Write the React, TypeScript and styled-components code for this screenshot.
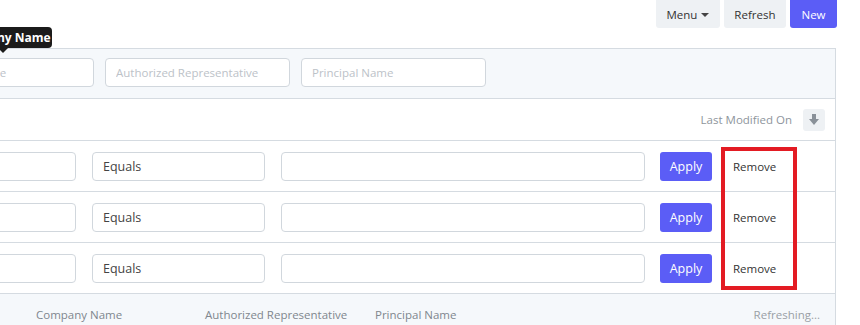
import React from "react";
import styled, { createGlobalStyle } from "styled-components";

const Global = createGlobalStyle`
  html, body { margin: 0; padding: 0; background: #fff; overflow: hidden; }
  body { font-family: "Open Sans", "Liberation Sans", sans-serif; color: #333; }
  * { box-sizing: border-box; }
`;

const Page = styled.div`
  position: relative;
  width: 860px;
  height: 325px;
  overflow: hidden;
`;

const TopBar = styled.div`
  display: flex;
  justify-content: flex-end;
  align-items: flex-start;
  gap: 4px;
  height: 48px;
  padding-right: 23px;
`;

const TopButton = styled.button<{ $primary?: boolean }>`
  margin-top: -4px;
  height: 32px;
  padding: 4px ${(p) => (p.$primary ? "11.5px" : "10.5px")} 0;
  border: none;
  border-radius: 3px;
  font-family: inherit;
  font-size: 11.5px;
  background: ${(p) => (p.$primary ? "#5b5df6" : "#eef1f4")};
  color: ${(p) => (p.$primary ? "#fff" : "#333")};
  display: flex;
  align-items: center;
  gap: 4px;
`;

const Caret = styled.span`
  width: 0;
  height: 0;
  border-left: 4px solid transparent;
  border-right: 4px solid transparent;
  border-top: 4px solid #444;
  margin-top: 1px;
`;

const Tooltip = styled.div`
  position: absolute;
  left: -46px;
  top: 27px;
  width: 98px;
  height: 21px;
  background: #1b1b1b;
  color: #fff;
  font-size: 12px;
  font-weight: 700;
  border-radius: 4px;
  display: flex;
  align-items: center;
  justify-content: center;
  &::after {
    content: "";
    position: absolute;
    left: 50%;
    bottom: -5px;
    margin-left: -5px;
    border-left: 5px solid transparent;
    border-right: 5px solid transparent;
    border-top: 5px solid #1b1b1b;
  }
`;

const Panel = styled.div`
  margin-left: -110px;
  width: 946px;
  border-top: 1px solid #d5dbe1;
  border-right: 1px solid #d5dbe1;
`;

const FilterRow = styled.div`
  display: flex;
  gap: 11px;
  padding: 9px 19px 11px;
  background: #f5f8fb;
  border-bottom: 1px solid #d5dbe1;
`;

const FilterInput = styled.input`
  width: 185px;
  height: 29px;
  border: 1px solid #d1d7dd;
  border-radius: 4px;
  padding: 0 10px;
  font-family: inherit;
  font-size: 11.5px;
  background: #fff;
  &::placeholder { color: #bcc2c8; }
`;

const SortBar = styled.div`
  display: flex;
  justify-content: flex-end;
  align-items: center;
  gap: 11px;
  height: 42px;
  padding-right: 10px;
  border-bottom: 1px solid #d5dbe1;
  font-size: 11.5px;
  color: #8e959c;
`;

const SortButton = styled.div`
  width: 22px;
  height: 22px;
  border-radius: 3px;
  background: #eef1f4;
  display: flex;
  align-items: center;
  justify-content: center;
`;

const Row = styled.div`
  display: flex;
  align-items: center;
  height: 51px;
  padding-left: 13px;
  border-bottom: 1px solid #d5dbe1;
`;

const Field = styled.div<{ $w: number }>`
  width: ${(p) => p.$w}px;
  height: 29px;
  border: 1px solid #d1d7dd;
  border-radius: 4px;
  padding: 0 10px;
  display: flex;
  align-items: center;
  font-size: 12.5px;
  color: #444;
  margin-right: 16px;
  background: #fff;
`;

const ApplyButton = styled.button`
  width: 52px;
  height: 29px;
  margin-left: -1px;
  border: none;
  border-radius: 3px;
  background: #5b5df6;
  color: #fff;
  font-family: inherit;
  font-size: 12.5px;
  padding: 0;
`;

const RemoveText = styled.span`
  margin-left: 21px;
  font-size: 11.5px;
  color: #333;
`;

const HeaderRow = styled.div`
  display: flex;
  align-items: center;
  height: 40px;
  background: #f5f8fb;
  font-size: 11.5px;
  color: #80878e;
  padding-right: 15px;
`;

const HeaderCell = styled.span<{ $w: number }>`
  width: ${(p) => p.$w}px;
  flex: none;
`;

const Refreshing = styled.span`
  margin-left: auto;
  color: #9aa0a6;
`;

const Highlight = styled.div`
  position: absolute;
  left: 721px;
  top: 147px;
  width: 76px;
  height: 143px;
  border: 4px solid #e31b23;
  pointer-events: none;
`;

const rows = [0, 1, 2];

export default function App() {
  return (
    <Page>
      <Global />
      <TopBar>
        <TopButton>
          Menu <Caret />
        </TopButton>
        <TopButton>Refresh</TopButton>
        <TopButton $primary>New</TopButton>
      </TopBar>
      <Panel>
        <FilterRow>
          <FilterInput placeholder="Company Name" />
          <FilterInput placeholder="Authorized Representative" />
          <FilterInput placeholder="Principal Name" />
        </FilterRow>
        <SortBar>
          Last Modified On
          <SortButton>
            <svg width="10" height="11" viewBox="0 0 10 11">
              <path d="M3 0h4v5h3L5 11 0 5h3z" fill="#8a9199" />
            </svg>
          </SortButton>
        </SortBar>
        {rows.map((r) => (
          <Row key={r}>
            <Field $w={173} />
            <Field $w={173}>Equals</Field>
            <Field $w={364} />
            <ApplyButton>Apply</ApplyButton>
            <RemoveText>Remove</RemoveText>
          </Row>
        ))}
        <HeaderRow>
          <HeaderCell $w={146} />
          <HeaderCell $w={169}>Company Name</HeaderCell>
          <HeaderCell $w={170}>Authorized Representative</HeaderCell>
          <HeaderCell $w={120}>Principal Name</HeaderCell>
          <Refreshing>Refreshing...</Refreshing>
        </HeaderRow>
      </Panel>
      <Tooltip>Company Name</Tooltip>
      <Highlight />
    </Page>
  );
}
